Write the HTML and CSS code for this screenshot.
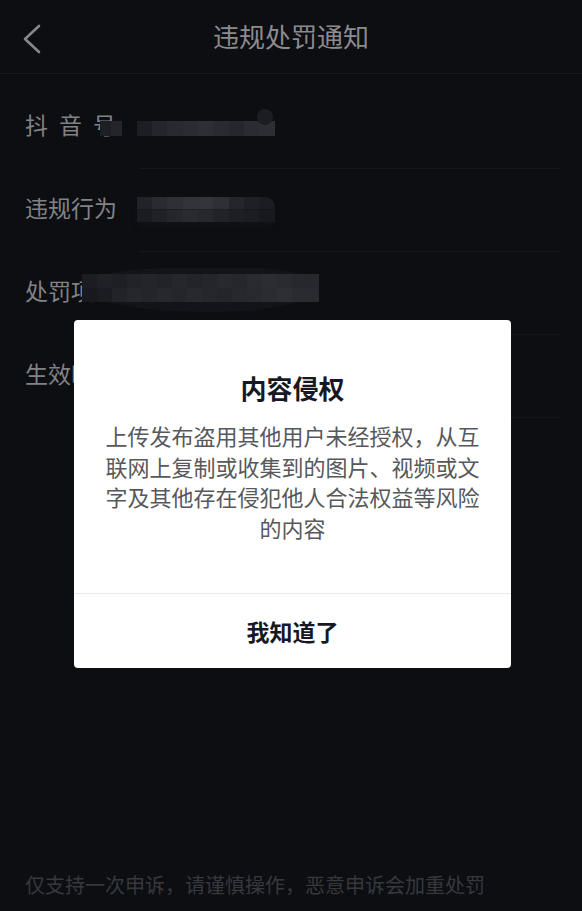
FILE: index.html
```html
<!DOCTYPE html>
<html lang="zh-CN">
<head>
<meta charset="utf-8">
<title>违规处罚通知</title>
<link rel="stylesheet" href="styles.css">
</head>
<body>
<div class="page">
  <header class="topbar">
    <span class="back">
      <svg width="20" height="30" viewBox="0 0 20 30" aria-hidden="true">
        <polyline points="16,2 2,15 16,28" fill="none" stroke="#86878a" stroke-width="2.6" stroke-linecap="round" stroke-linejoin="round"/>
      </svg>
    </span>
    <h1 class="title">违规处罚通知</h1>
    <span class="spacer"></span>
  </header>

  <div class="list">
    <div class="row">
      <span class="label label-spaced">抖音号</span>
      <span class="value value-1">
        <span class="mos mos-1a"></span>
        <span class="mos mos-1b"><span class="bump"></span></span>
      </span>
    </div>
    <div class="row">
      <span class="label">违规行为</span>
      <span class="value value-2">
        <span class="mos mos-2"></span>
      </span>
    </div>
    <div class="row">
      <span class="label">处罚项</span>
      <span class="value value-3">
        <span class="smear"><span class="mos mos-3"></span></span>
      </span>
    </div>
    <div class="row">
      <span class="label">生效时间</span>
    </div>
  </div>

  <p class="note">仅支持一次申诉，请谨慎操作，恶意申诉会加重处罚</p>

  <div class="modal">
    <div class="modal-body">
      <h2 class="modal-title">内容侵权</h2>
      <p class="modal-text">上传发布盗用其他用户未经授权，从互联网上复制或收集到的图片、视频或文字及其他存在侵犯他人合法权益等风险的内容</p>
    </div>
    <div class="modal-action">我知道了</div>
  </div>
</div>
</body>
</html>
```

FILE: styles.css
```css
* { box-sizing: border-box; }

html, body {
  margin: 0;
  padding: 0;
  background: #0d0e12;
}

body {
  font-family: "Noto Sans CJK SC", "Noto Sans", sans-serif;
}

.page {
  position: relative;
  width: 582px;
  height: 911px;
  display: flex;
  flex-direction: column;
  background: #0d0e12;
  overflow: hidden;
}

.topbar {
  height: 74px;
  flex: none;
  display: grid;
  grid-template-columns: 1fr auto 1fr;
  align-items: center;
  border-bottom: 1px solid #17181d;
}

.back {
  display: flex;
  align-items: center;
  height: 30px;
  padding-left: 23px;
  margin-top: 4px;
}

.title {
  margin: 0;
  font-size: 26px;
  font-weight: 400;
  line-height: 36px;
  color: #8b8b8e;
  margin-top: -2px;
}

.list {
  margin-top: 12px;
  display: flex;
  flex-direction: column;
}

.row {
  height: 83px;
  display: flex;
  align-items: center;
  padding-left: 25px;
  background: linear-gradient(#16171c, #16171c) no-repeat 140px 100% / 420px 1px;
}

.label {
  font-size: 23px;
  line-height: 32px;
  color: #818285;
  white-space: nowrap;
  margin-top: -7px;
}

.label-spaced {
  letter-spacing: 11px;
}

.value {
  display: flex;
  align-items: center;
}

.mos {
  display: block;
  filter: blur(0.6px);
}

.value-1 {
  margin-left: -27px;
  margin-top: 2px;
  gap: 15px;
}

.mos-1a {
  width: 22px;
  height: 15px;
  background: linear-gradient(90deg, #1e1f24 0 11px, #24252a 11px 22px);
}

.mos-1b {
  position: relative;
  width: 138px;
  height: 15px;
  background: linear-gradient(90deg,
    #1d1e23 0 15px, #25262b 15px 30px, #292a2f 30px 46px,
    #2b2c31 46px 61px, #2e2f34 61px 76px, #2a2b30 76px 92px,
    #26272c 92px 107px, #2b2c31 107px 122px, #2d2e33 122px 138px);
}

.bump {
  position: absolute;
  right: 2px;
  top: -12px;
  width: 16px;
  height: 16px;
  border-radius: 50%;
  background: #1c1d22;
}

.value-2 {
  margin-left: 20px;
  margin-top: -2px;
}

.mos-2 {
  width: 138px;
  height: 25px;
  border-top-right-radius: 10px;
  background:
    linear-gradient(90deg,
      #222328 0 15px, #2a2b30 15px 30px, #2f3035 30px 46px,
      #333439 46px 61px, #34353a 61px 76px, #2f3035 76px 92px,
      #25262b 92px 107px, #1f2025 107px 122px, #1c1d22 122px 138px) no-repeat 0 0 / 100% 50%,
    linear-gradient(90deg,
      #1b1c21 0 15px, #202126 15px 30px, #26272c 30px 46px,
      #2a2b30 46px 61px, #27282d 61px 76px, #222328 76px 92px,
      #1e1f24 92px 107px, #1c1d22 107px 122px, #18191e 122px 138px) no-repeat 0 100% / 100% 50%;
  box-shadow: 0 6px 6px -2px #121318;
}

.value-3 {
  margin-left: -12px;
  margin-top: -8px;
}

.smear {
  display: flex;
  align-items: center;
  padding: 6px 0 10px 0;
  border-radius: 40% 30% 50% 60% / 50% 50% 60% 60%;
  background: #131419;
}

.mos-3 {
  width: 237px;
  height: 28px;
  background:
    linear-gradient(90deg,
      #1c1d22 0 15px, #202126 15px 30px, #1e1f24 30px 45px,
      #222328 45px 60px, #24252a 60px 75px, #222328 75px 90px,
      #26272c 90px 105px, #232429 105px 120px, #25262b 120px 135px,
      #28292e 135px 150px, #26272c 150px 165px, #2a2b30 165px 180px,
      #2c2d32 180px 195px, #2a2b30 195px 210px, #27282d 210px 237px) no-repeat 0 0 / 100% 50%,
    linear-gradient(90deg,
      #18191e 0 15px, #1b1c21 15px 30px, #222328 30px 45px,
      #26272c 45px 60px, #24252a 60px 75px, #27282d 75px 90px,
      #25262b 90px 105px, #28292e 105px 120px, #26272c 120px 135px,
      #24252a 135px 150px, #27282d 150px 165px, #292a2f 165px 180px,
      #2b2c31 180px 195px, #2e2f34 195px 210px, #2a2b30 210px 237px) no-repeat 0 100% / 100% 50%;
}

.note {
  margin: auto 0 12px 0;
  padding-left: 25px;
  font-size: 20px;
  line-height: 28px;
  color: #37383d;
  white-space: nowrap;
}

.modal {
  position: absolute;
  top: 320px;
  left: 74px;
  width: 437px;
  background: #ffffff;
  border-radius: 4px;
  overflow: hidden;
}

.modal-body {
  padding: 50px 31px 51px;
  text-align: center;
  border-bottom: 1px solid #e9e9eb;
}

.modal-title {
  margin: 0;
  font-size: 26px;
  line-height: 36px;
  font-weight: 700;
  color: #161823;
}

.modal-text {
  margin: 14px 0 0 0;
  font-size: 22px;
  line-height: 30.5px;
  color: #57585c;
}

.modal-action {
  height: 74px;
  display: flex;
  align-items: center;
  justify-content: center;
  font-size: 23px;
  font-weight: 700;
  color: #161823;
}
```
